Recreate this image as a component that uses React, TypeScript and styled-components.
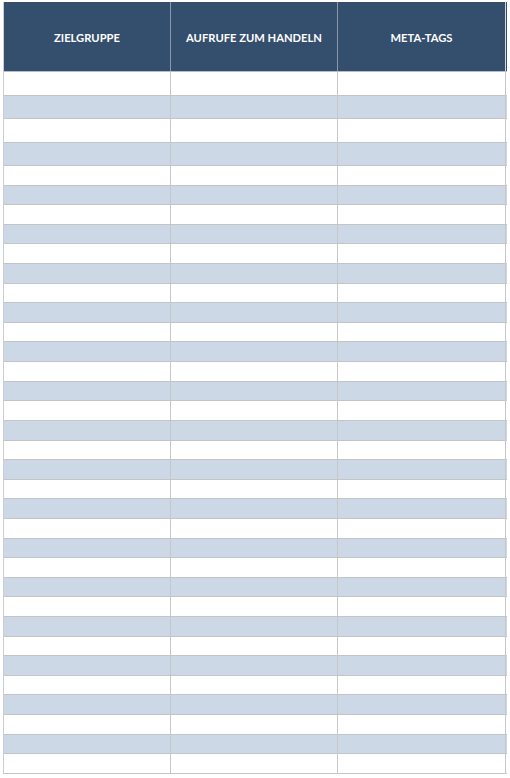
import * as React from 'react';
import styled, { createGlobalStyle } from 'styled-components';

const GlobalStyle = createGlobalStyle`
  html, body {
    margin: 0;
    padding: 0;
    background: #ffffff;
  }
  body {
    font-family: Lato, "Liberation Sans", sans-serif;
  }
`;

const columns = ['ZIELGRUPPE', 'AUFRUFE ZUM HANDELN', 'META-TAGS'];

// the first four rows of the sheet are a little taller than the rest
const rowHeights: number[] = [
  ...Array(4).fill(23.5),
  ...Array(31).fill(19.613),
];

const Page = styled.div`
  padding: 2px 0 0 3px;
`;

const Table = styled.div`
  width: 503px;
  border-left: 1px solid #c9ccd1;
`;

const HeaderRow = styled.div`
  display: grid;
  grid-template-columns: 167px 167px 168px;
  height: 70px;
  background: #344e6d;
  border-bottom: 1px solid #b9bcc2;
  box-sizing: border-box;
`;

const HeaderCell = styled.div<{ $last?: boolean }>`
  display: flex;
  align-items: center;
  justify-content: center;
  padding-top: 1px;
  color: #ffffff;
  font-family: Lato, "Liberation Sans", sans-serif;
  font-weight: 700;
  font-size: 11.2px;
  border-right: 1px solid ${(p) => (p.$last ? '#d4d6da' : '#8a97a8')};
`;

const Row = styled.div<{ $striped: boolean }>`
  display: grid;
  grid-template-columns: 167px 167px 168px;
  background: ${(p) => (p.$striped ? '#cdd8e6' : '#ffffff')};
  border-bottom: 1px solid #c3c5c8;
  box-sizing: border-box;
`;

const Cell = styled.div`
  border-right: 1px solid #c6c7c9;
`;

const App: React.FC = () => {
  return (
    <>
      <GlobalStyle />
      <Page>
        <Table>
          <HeaderRow>
            {columns.map((c, i) => (
              <HeaderCell key={c} $last={i === columns.length - 1}>
                {c}
              </HeaderCell>
            ))}
          </HeaderRow>
          {rowHeights.map((h, i) => (
            <Row key={i} $striped={i % 2 === 1} style={{ height: `${h}px` }}>
              {columns.map((c) => (
                <Cell key={c} />
              ))}
            </Row>
          ))}
        </Table>
      </Page>
    </>
  );
};

export default App;
